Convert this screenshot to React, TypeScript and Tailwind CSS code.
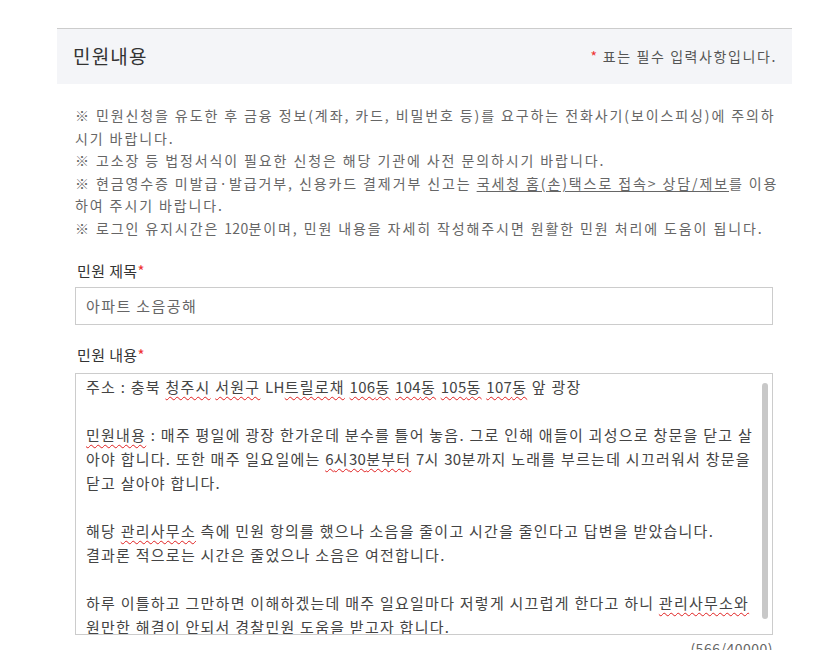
import React from 'react';

const font = { fontFamily: '"Noto Sans CJK KR", "Noto Sans", sans-serif' };

const Sp = ({ children }: { children: React.ReactNode }) => (
  <span className="underline decoration-wavy decoration-[#e02020] decoration-1 underline-offset-[3px]">{children}</span>
);

const N = ({ children }: { children: React.ReactNode }) => <span className="tracking-[0.3px]">{children}</span>;

const notices: React.ReactNode[] = [
  '※ 민원신청을 유도한 후 금융 정보(계좌, 카드, 비밀번호 등)를 요구하는 전화사기(보이스피싱)에 주의하',
  '시기 바랍니다.',
  '※ 고소장 등 법정서식이 필요한 신청은 해당 기관에 사전 문의하시기 바랍니다.',
  <>
    ※ 현금영수증 미발급·발급거부, 신용카드 결제거부 신고는{' '}
    <span className="underline underline-offset-2">국세청 홈(손)택스로 접속&gt; 상담/제보</span>를 이용
  </>,
  '하여 주시기 바랍니다.',
  <>※ 로그인 유지시간은 <N>120</N>분이며, 민원 내용을 자세히 작성해주시면 원활한 민원 처리에 도움이 됩니다.</>,
];

const body: React.ReactNode[] = [
  <>주소 : 충북 <Sp>청주시</Sp> <Sp>서원구</Sp> <N>LH</N><Sp>트릴로채</Sp> <Sp><N>106</N>동</Sp> <Sp><N>104</N>동</Sp> <Sp><N>105</N>동</Sp> <Sp><N>107</N>동</Sp> 앞 광장</>,
  '',
  <><Sp>민원내용</Sp> : 매주 평일에 광장 한가운데 분수를 틀어 놓음. 그로 인해 애들이 괴성으로 창문을 닫고 살</>,
  <>아야 합니다. 또한 매주 일요일에는 <Sp><N>6</N>시<N>30</N>분부터</Sp> <N>7</N>시 <N>30</N>분까지 노래를 부르는데 시끄러워서 창문을</>,
  '닫고 살아야 합니다.',
  '',
  <>해당 <Sp>관리사무소</Sp> 측에 민원 항의를 했으나 소음을 줄이고 시간을 줄인다고 답변을 받았습니다.</>,
  '결과론 적으로는 시간은 줄었으나 소음은 여전합니다.',
  '',
  <>하루 이틀하고 그만하면 이해하겠는데 매주 일요일마다 저렇게 시끄럽게 한다고 하니 <Sp>관리사무소와</Sp></>,
  '원만한 해결이 안되서 경찰민원 도움을 받고자 합니다.',
];

export default function App() {
  return (
    <div className="w-[834px] h-[650px] overflow-hidden bg-white" style={font}>
      <div className="ml-[57px] w-[735px] pt-[28px]">
        <div className="h-[56px] border-t border-[#cccccc] bg-[#f4f5f8] flex items-center justify-between pl-[16px] pr-[15px]">
          <h2 className="text-[19px] text-[#333] font-normal tracking-[1.2px]">민원내용</h2>
          <p className="text-[14px] text-[#555] tracking-[1.6px]">
            <span className="text-[#e33] mr-1">*</span>표는 필수 입력사항입니다.
          </p>
        </div>

        <div className="pl-[18px] pr-[19px]">
          <div className="mt-[20px] text-[14px] leading-[22.5px] text-[#666] whitespace-nowrap tracking-[1.9px]">
            {notices.map((n, i) => (
              <div key={i}>{n}</div>
            ))}
          </div>

          <label className="block mt-[20px] text-[15px] leading-[24px] text-[#333] pl-[2px] tracking-[0.4px]">
            민원 제목<span className="text-[#e33]">*</span>
          </label>
          <div className="mt-[4px] h-[38px] border border-[#cccccc] flex items-center px-[10px] text-[15px] text-[#666] tracking-[1.4px]">
            아파트 소음공해
          </div>

          <label className="block mt-[18px] text-[15px] leading-[24px] text-[#333] pl-[2px] tracking-[0.4px]">
            민원 내용<span className="text-[#e33]">*</span>
          </label>
          <div className="relative mt-[6px] h-[262px] border border-[#cccccc] overflow-hidden">
            <div className="pl-[10px] pt-[1px] text-[15px] leading-[24px] text-[#444] whitespace-nowrap tracking-[1.25px]">
              {body.map((l, i) => (
                <div key={i} className="h-[24px]">{l}</div>
              ))}
            </div>
            <div className="absolute right-[4px] top-[9px] w-[6px] h-[236px] rounded-full bg-[#c8c8c8]" />
          </div>
          <div className="text-right text-[14px] text-[#666] leading-[20px] mt-[3px] tracking-[0.5px]">(566/40000)</div>
        </div>
      </div>
    </div>
  );
}
